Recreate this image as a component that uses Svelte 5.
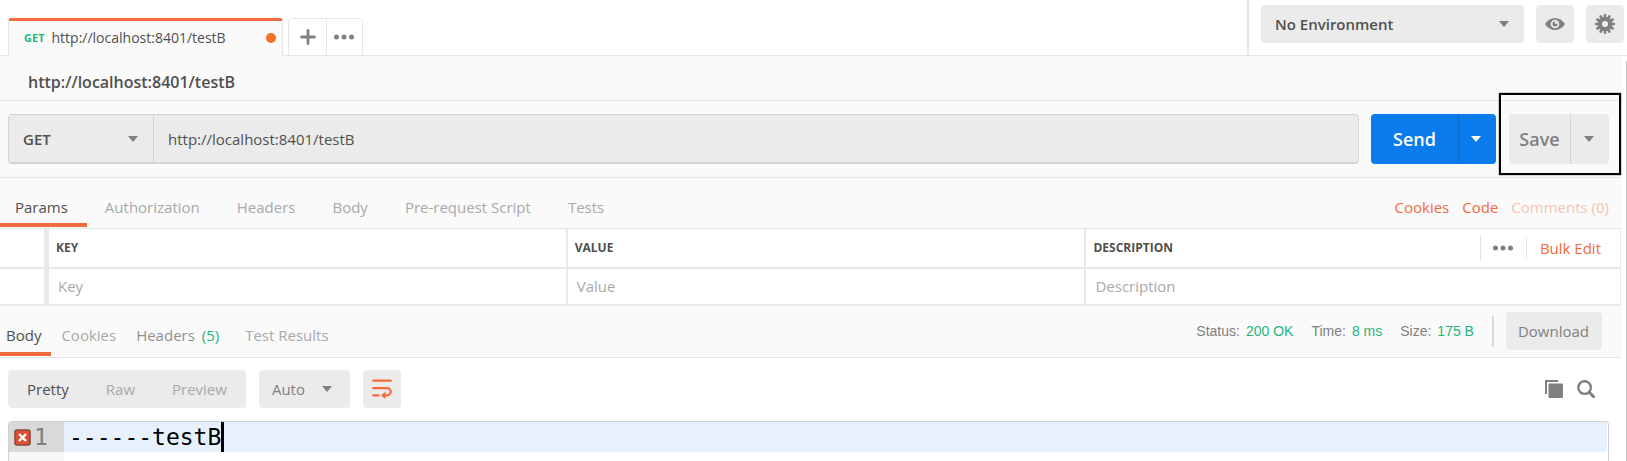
<script>
  const requestTabs = ['Params', 'Authorization', 'Headers', 'Body', 'Pre-request Script', 'Tests'];
  const views = ['Pretty', 'Raw', 'Preview'];
  const stats = [
    ['Status:', '200 OK'],
    ['Time:', '8 ms'],
    ['Size:', '175 B']
  ];
  const teeth = [0, 30, 60, 90, 120, 150, 180, 210, 240, 270, 300, 330];
  let url = $state('http://localhost:8401/testB');
  let requestTab = $state('Params');
  let view = $state('Pretty');
</script>

{#snippet arrow()}
  <svg class="arrow" viewBox="0 0 10 6" aria-hidden="true"><path d="M0 0h10L5 6z" /></svg>
{/snippet}

{#snippet dots()}
  <svg class="dots" viewBox="0 0 22 6" aria-hidden="true">
    <circle cx="3.5" cy="3" r="2.5" /><circle cx="11" cy="3" r="2.5" /><circle cx="18.5" cy="3" r="2.5" />
  </svg>
{/snippet}

<div class="app">
  <header>
    <div class="tab-strip">
      <button class="file-tab">
        <b>GET</b><span>http://localhost:8401/testB</span><i></i>
      </button>
      <div class="tab-actions">
        <button aria-label="New tab">
          <svg width="16" height="16" viewBox="0 0 16 16"><path d="M8 1.5v13M1.5 8h13" stroke="#808080" stroke-width="2.8" stroke-linecap="round" /></svg>
        </button>
        <button aria-label="Tab options">{@render dots()}</button>
      </div>
    </div>
    <div class="environment">
      <label class="picker env">
        <select aria-label="Environment"><option>No Environment</option></select>
        {@render arrow()}
      </label>
      <button class="square" aria-label="Environment quick look">
        <svg width="20" height="12" viewBox="0 0 20 12">
          <path d="M0 6C5-2 15-2 20 6 15 14 5 14 0 6z" fill="#808080" />
          <circle cx="10" cy="6" r="4.3" fill="#ebebeb" />
          <circle cx="10" cy="6" r="2.5" fill="#808080" />
          <circle cx="11" cy="4.7" r="1.3" fill="#ebebeb" />
        </svg>
      </button>
      <button class="square" aria-label="Settings">
        <svg width="20" height="20" viewBox="-10 -10 20 20">
          {#each teeth as angle}
            <rect x="-1.3" y="-10" width="2.6" height="5" rx="1" fill="#808080" transform="rotate({angle})" />
          {/each}
          <circle r="5.2" fill="none" stroke="#808080" stroke-width="4.2" />
        </svg>
      </button>
    </div>
  </header>

  <div class="workspace">
    <main>
      <h1>http://localhost:8401/testB</h1>

      <form class="request" onsubmit={(e) => e.preventDefault()}>
        <div class="address">
          <label class="picker method">
            <select aria-label="Method"><option>GET</option></select>
            {@render arrow()}
          </label>
          <input aria-label="Request URL" bind:value={url} />
        </div>
        <div class="split send">
          <button>Send</button><button aria-label="Send options">{@render arrow()}</button>
        </div>
        <div class="save-frame">
          <div class="split save">
            <button>Save</button><button aria-label="Save options">{@render arrow()}</button>
          </div>
        </div>
      </form>

      <nav class="request-tabs">
        {#each requestTabs as name}
          <button class:active={requestTab === name} onclick={() => (requestTab = name)}>{name}</button>
        {/each}
        <div class="links">
          <a href="#cookies">Cookies</a><a href="#code">Code</a><a class="faded" href="#comments">Comments (0)</a>
        </div>
      </nav>

      <table>
        <colgroup><col class="check" /><col class="wide" /><col class="wide" /><col /></colgroup>
        <thead>
          <tr>
            <th></th>
            <th>KEY</th>
            <th>VALUE</th>
            <th>
              <div class="last-head">
                <span>DESCRIPTION</span>
                <button aria-label="Column options">{@render dots()}</button>
                <a href="#bulk">Bulk Edit</a>
              </div>
            </th>
          </tr>
        </thead>
        <tbody>
          <tr>
            <td></td>
            <td><input placeholder="Key" aria-label="Key" /></td>
            <td><input placeholder="Value" aria-label="Value" /></td>
            <td><input placeholder="Description" aria-label="Description" /></td>
          </tr>
        </tbody>
      </table>

      <nav class="response-tabs">
        <button class="active">Body</button>
        <button>Cookies</button>
        <button class="dark">Headers <em>(5)</em></button>
        <button>Test Results</button>
        <dl>
          {#each stats as [name, value]}
            <div><dt>{name}</dt><dd>{value}</dd></div>
          {/each}
        </dl>
        <button class="download">Download</button>
      </nav>

      <section class="response">
        <div class="tools">
          <div class="views">
            {#each views as name}
              <button class:active={view === name} onclick={() => (view = name)}>{name}</button>
            {/each}
          </div>
          <label class="picker auto">
            <select aria-label="Format"><option>Auto</option></select>
            {@render arrow()}
          </label>
          <button class="square" aria-label="Wrap lines">
            <svg width="20" height="20" viewBox="0 0 20 20" fill="none" stroke="#f26b3a" stroke-width="2.2" stroke-linecap="round">
              <path d="M1.2 1.6h17.6M1.2 9.2h13.9a3.6 3.6 0 0 1 0 7.2H12M1.2 16.4h5.4" />
              <path d="M13.4 12.4v7.6l-4.4-3.6z" fill="#f26b3a" stroke="none" />
            </svg>
          </button>
          <div class="right">
            <button aria-label="Copy">
              <svg width="18" height="18" viewBox="0 0 18 18">
                <path d="M1 14V1h12" fill="none" stroke="#808080" stroke-width="2" />
                <rect x="3.5" y="3.5" width="14.5" height="14.5" rx="1" fill="#808080" />
              </svg>
            </button>
            <button aria-label="Search">
              <svg width="18" height="18" viewBox="0 0 18 18" fill="none" stroke="#808080">
                <circle cx="7.6" cy="7.6" r="6.3" stroke-width="2.4" />
                <path d="M12.2 12.2l4.4 4.4" stroke-width="3" stroke-linecap="round" />
              </svg>
            </button>
          </div>
        </div>

        <div class="editor">
          <div class="gutter">
            <div class="line-number">
              <svg width="17" height="17" viewBox="0 0 17 17">
                <rect x="1" y="1" width="15" height="15" rx="2" fill="#dd4f31" stroke="#8c4a3c" stroke-width="1.6" />
                <path d="M5 5l7 7M12 5l-7 7" stroke="#fff" stroke-width="2.4" />
              </svg>
              <span>1</span>
            </div>
          </div>
          <div class="code"><pre>------testB<i></i></pre></div>
        </div>
      </section>
    </main>
    <div class="edge"></div>
  </div>
</div>

<style>
  :global(body) { margin: 0; overflow: hidden; }
  .app {
    display: flex;
    flex-direction: column;
    height: 100vh;
    background: #fff;
    color: #505050;
    font: 15px/20px "Open Sans", sans-serif;
  }
  .app * { box-sizing: border-box; }
  button, input, select {
    margin: 0;
    padding: 0;
    border: 0;
    background: none;
    color: inherit;
    font: inherit;
    appearance: none;
    outline: 0;
  }
  button { display: flex; align-items: center; justify-content: center; cursor: pointer; }
  a { color: #f26b3a; text-decoration: none; }
  svg { display: block; flex: none; }
  .arrow { width: 10px; height: 6px; fill: #808080; }
  .dots { width: 22px; height: 6px; fill: #808080; }

  header {
    display: flex;
    justify-content: space-between;
    height: 56px;
    flex: none;
    box-shadow: inset 0 -1px #e6e6e6;
  }
  .tab-strip { display: flex; align-items: flex-end; gap: 5px; padding-left: 8px; }
  .file-tab {
    width: 275px;
    height: 38px;
    padding: 0 6px 2px 15px;
    gap: 7px;
    border: 1px solid #e6e6e6;
    border-top: 3px solid #f26b3a;
    border-bottom: 0;
    border-radius: 3px 3px 0 0;
    background: #fafafa;
    font-size: 14px;
  }
  .file-tab b { color: #26b47f; font-size: 11px; }
  .file-tab i { width: 10px; height: 10px; margin-left: auto; border-radius: 50%; background: #f47023; }
  .tab-actions { display: flex; height: 38px; border: 1px solid #e6e6e6; border-radius: 4px 4px 0 0; }
  .tab-actions button { width: 37px; }
  .tab-actions button + button { width: 36px; padding-right: 2px; border-left: 1px solid #e6e6e6; }
  .environment { display: flex; gap: 12px; padding: 5px 3px 0 12px; border-left: 2px solid #e6e6e6; height: 55px; }

  .picker { display: grid; align-items: center; border-radius: 4px; background: #ebebeb; }
  .picker select, .picker .arrow { grid-area: 1 / 1; }
  .picker select { width: 100%; height: 100%; padding-left: 14px; }
  .picker .arrow { justify-self: end; pointer-events: none; margin-right: 15px; }
  .env { width: 263px; height: 38px; font-weight: 600; }
  .square { width: 38px; height: 38px; border-radius: 4px; background: #ebebeb; }

  .workspace { display: flex; flex: 1; min-height: 0; }
  main { display: flex; flex-direction: column; flex: 1; min-width: 0; background: #fafafa; }
  .edge { width: 6px; margin-top: 5px; border-right: 1px solid #c0c0c0; }

  h1 {
    margin: 0;
    padding: 16px 28px 8px;
    border-bottom: 1px solid #e6e6e6;
    font-size: 16px;
    font-weight: 600;
    line-height: 20px;
  }

  .request { display: flex; align-items: center; height: 77px; padding-left: 8px; flex: none; border-bottom: 1px solid #e6e6e6; }
  .address {
    display: flex;
    flex: 1;
    height: 50px;
    border: 1px solid #d4d4d4;
    border-bottom-width: 2px;
    border-radius: 4px;
    background: #ebebeb;
  }
  .method { width: 145px; border-right: 1px solid #d4d4d4; border-radius: 0; font-weight: 600; }
  .address input { flex: 1; padding: 0 14px; }
  .split { display: flex; height: 50px; border-radius: 4px; font-size: 18px; font-weight: 600; }
  .split button + button { border-left: 1px solid #d4d4d4; width: 39px; padding-right: 3px; }
  .send { margin-left: 12px; background: #097bed; color: #fff; }
  .send button:first-child { width: 87px; }
  .send button + button { border-color: #0a6cd0; width: 38px; }
  .send .arrow { fill: #fff; }
  .save-frame { align-self: flex-start; margin: -8px 0 0 3px; padding: 19px 10px 9px 8px; border: 2px solid #000; box-shadow: 0 0 1px #000; }
  .save { background: #ebebeb; color: #808080; }
  .save button:first-child { width: 61px; }

  nav { display: flex; flex: none; border-bottom: 1px solid #e6e6e6; color: #a9a9a9; }
  nav button { border-bottom: 4px solid transparent; }
  nav .active { border-color: #f26b3a; color: #505050; }
  .request-tabs { height: 51px; padding-bottom: 1px; }
  .request-tabs button { padding: 15px 19px 3px 18px; }
  .request-tabs button:first-child { padding-left: 15px; }
  .links { display: flex; align-items: center; gap: 13px; margin-left: auto; padding: 8px 12px 0 0; }
  .faded { color: #f8c3b0; }

  table { width: 100%; table-layout: fixed; border-spacing: 0; background: #fff; }
  .check { width: 49px; }
  .wide { width: 32%; }
  th, td { padding: 0 7px; border-right: 2px solid #e9e9e9; border-bottom: 2px solid #e9e9e9; text-align: left; }
  th { height: 40px; font-size: 12px; font-weight: 700; }
  td { height: 37px; padding: 0 9px 2px; }
  th:first-child, td:first-child { border-right-width: 5px; }
  th:last-child, td:last-child { border-right-width: 1px; }
  td input { width: 100%; display: block; }
  td input::placeholder { color: #a9a9a9; opacity: 1; }
  .last-head { display: flex; align-items: center; }
  .last-head button { height: 26px; width: 46px; margin-left: auto; border-left: 1px solid #e6e6e6; }
  .last-head a { padding: 0 12px 0 13px; border-left: 1px solid #e6e6e6; font-size: 15px; font-weight: 400; }

  .response-tabs { align-items: stretch; height: 52px; padding-bottom: 1px; }
  .response-tabs button { padding: 14px 10px 2px; white-space: pre; }
  .response-tabs button:first-child { padding-left: 6px; }
  .response-tabs .dark { padding-right: 16px; color: #909090; }
  em { margin-left: 3px; color: #26b47f; font-style: normal; }
  dl { display: flex; align-items: center; align-self: center; gap: 18px; height: 31px; margin: 0 12px 0 auto; padding-right: 18px; border-right: 2px solid #d9d9d9; font: 14px/20px "Liberation Sans", sans-serif; }
  dl div { display: flex; gap: 6px; }
  dt { color: #808080; }
  dd { margin: 0; color: #26b47f; }
  .response-tabs .download { align-self: center; height: 38px; margin-right: 19px; padding: 0 13px 0 12px; border: 0; border-radius: 4px; background: #ebebeb; color: #808080; }

  .response { display: flex; flex-direction: column; flex: 1; min-height: 0; padding: 12px 12px 0 8px; background: #fff; }
  .tools { display: flex; gap: 13px; flex: none; }
  .views { display: flex; gap: 37px; padding: 0 19px; border-radius: 4px; background: #ebebeb; color: #a9a9a9; }
  .views .active { color: #505050; }
  .auto { width: 91px; color: #808080; }
  .auto select { padding-left: 13px; }
  .auto .arrow { margin-right: 18px; }
  .right { display: flex; gap: 14px; margin: 0 14px 0 auto; }

  .editor { display: flex; flex: 1; margin-top: 13px; border: 1px solid #d0d0d0; border-bottom: 0; border-radius: 4px 4px 0 0; overflow: hidden; font: 23px/30px "DejaVu Sans Mono", monospace; }
  .gutter { width: 55px; background: #f7f7f7; }
  .line-number { display: flex; align-items: center; gap: 3px; padding-left: 5px; background: #d9d9d9; color: #808080; }
  .code { flex: 1; padding-right: 1px; }
  pre { display: flex; margin: 0; padding-left: 5px; background: #e7f1fe; color: #000; font: inherit; }
  pre i { width: 3px; background: #000; }
</style>
